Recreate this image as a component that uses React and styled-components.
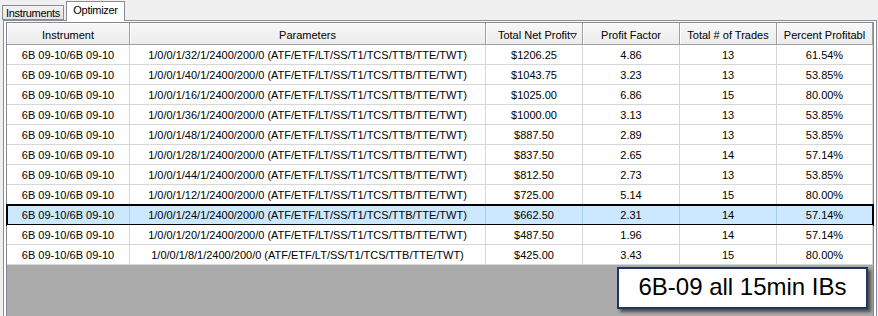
import React from 'react';
import styled, {createGlobalStyle} from 'styled-components';

const GlobalStyle = createGlobalStyle`
  html, body {
    margin: 0;
    padding: 0;
    background: #f0f0f0;
  }
  body {
    font-family: "Liberation Sans", Arial, sans-serif;
    font-size: 11px;
    color: #000;
  }
`;

const COLUMNS = '123px 356px 97px 97px 97px 96px';

const Window = styled.div`
  position: relative;
  width: 878px;
  height: 316px;
  overflow: hidden;
  display: flex;
  flex-direction: column;
  background: #f0f0f0;
`;

const TabStrip = styled.div`
  height: 20px;
  display: flex;
  align-items: flex-end;
  padding-left: 2px;
  position: relative;
  z-index: 1;
`;

const Tab = styled.div`
  box-sizing: border-box;
  width: ${p => p.width}px;
  height: ${p => (p.active ? 20 : 15)}px;
  margin-right: ${p => (p.active ? 0 : 2)}px;
  margin-bottom: ${p => (p.active ? -1 : 0)}px;
  border: 1px solid #898c95;
  border-bottom: ${p => (p.active ? 'none' : '1px solid #898c95')};
  background: ${p => (p.active ? '#ffffff' : 'linear-gradient(#f3f3f3, #e4e4e4)')};
  display: flex;
  align-items: center;
  justify-content: center;
  padding-bottom: ${p => (p.active ? 3 : 0)}px;
  letter-spacing: -0.3px;
  white-space: nowrap;
`;

const Panel = styled.div`
  flex: 1;
  display: flex;
  margin: 0 1px 0 3px;
  padding: 1px 2px 0 2px;
  border: 1px solid #898c95;
  border-bottom: none;
  background: #ffffff;
  min-height: 0;
`;

const Grid = styled.div`
  flex: 1;
  display: flex;
  flex-direction: column;
  border: 1px solid #828790;
  border-bottom: none;
  background: #ababab;
`;

const HeaderRow = styled.div`
  display: grid;
  grid-template-columns: ${COLUMNS};
  height: 22px;
`;

const HeaderCell = styled.div`
  position: relative;
  box-sizing: border-box;
  display: flex;
  align-items: center;
  justify-content: center;
  padding-top: 2px;
  white-space: nowrap;
  overflow: hidden;
  background: linear-gradient(#f7f7f7, #ececec);
  border-right: 1px solid #a0a0a0;
  border-bottom: 1px solid #a0a0a0;
  box-shadow: inset 1px 1px 0 #ffffff;
`;

const SortGlyph = styled.svg`
  position: absolute;
  right: 5px;
  top: 10px;
`;

const Row = styled.div`
  display: grid;
  grid-template-columns: ${COLUMNS};
  height: 20px;
  background: ${p => (p.selected ? '#cce8ff' : '#ffffff')};
  outline: ${p => (p.selected ? '2px solid #000' : 'none')};
  outline-offset: -1px;
`;

const Cell = styled.div`
  box-sizing: border-box;
  display: flex;
  align-items: center;
  justify-content: center;
  white-space: nowrap;
  overflow: hidden;
  border-right: 1px solid ${p => (p.selected ? '#a6cdee' : '#d7d7d7')};
  border-bottom: 1px solid ${p => (p.selected ? '#a6cdee' : '#d7d7d7')};
`;

const Note = styled.div`
  position: absolute;
  left: 617px;
  top: 267px;
  box-sizing: border-box;
  width: 251px;
  height: 42px;
  border: 2px solid #1f3660;
  background: #ffffff;
  box-shadow: 3px 3px 3px rgba(0, 0, 0, 0.55);
  display: flex;
  align-items: center;
  justify-content: center;
  padding-bottom: 3px;
  font-family: "Liberation Sans", Arial, sans-serif;
  font-size: 24px;
  color: #000;
`;

const headers = ['Instrument', 'Parameters', 'Total Net Profit', 'Profit Factor', 'Total # of Trades', 'Percent Profitabl'];

const results = [
  ['32', '$1206.25', '4.86', '13', '61.54%'],
  ['40', '$1043.75', '3.23', '13', '53.85%'],
  ['16', '$1025.00', '6.86', '15', '80.00%'],
  ['36', '$1000.00', '3.13', '13', '53.85%'],
  ['48', '$887.50', '2.89', '13', '53.85%'],
  ['28', '$837.50', '2.65', '14', '57.14%'],
  ['44', '$812.50', '2.73', '13', '53.85%'],
  ['12', '$725.00', '5.14', '15', '80.00%'],
  ['24', '$662.50', '2.31', '14', '57.14%'],
  ['20', '$487.50', '1.96', '14', '57.14%'],
  ['8', '$425.00', '3.43', '15', '80.00%'],
];

const SELECTED = 8;

export default function App() {
  return (
    <>
      <GlobalStyle />
      <Window>
        <TabStrip>
          <Tab width={62}>Instruments</Tab>
          <Tab width={59} active>Optimizer</Tab>
        </TabStrip>
        <Panel>
          <Grid>
            <HeaderRow>
              {headers.map((h, i) => (
                <HeaderCell key={h}>
                  {h}
                  {i === 2 && (
                    <SortGlyph width="7" height="6" viewBox="0 0 7 6">
                      <path d="M0.5 0.5 H6.5 L3.5 5.5 Z" fill="none" stroke="#333" strokeWidth="1" />
                    </SortGlyph>
                  )}
                </HeaderCell>
              ))}
            </HeaderRow>
            {results.map(([step, profit, factor, trades, pct], i) => {
              const sel = i === SELECTED;
              return (
                <Row key={i} selected={sel}>
                  <Cell selected={sel}>6B 09-10/6B 09-10</Cell>
                  <Cell selected={sel}>{`1/0/0/1/${step}/1/2400/200/0 (ATF/ETF/LT/SS/T1/TCS/TTB/TTE/TWT)`}</Cell>
                  <Cell selected={sel}>{profit}</Cell>
                  <Cell selected={sel}>{factor}</Cell>
                  <Cell selected={sel}>{trades}</Cell>
                  <Cell selected={sel}>{pct}</Cell>
                </Row>
              );
            })}
          </Grid>
        </Panel>
        <Note>6B-09 all 15min IBs</Note>
      </Window>
    </>
  );
}
